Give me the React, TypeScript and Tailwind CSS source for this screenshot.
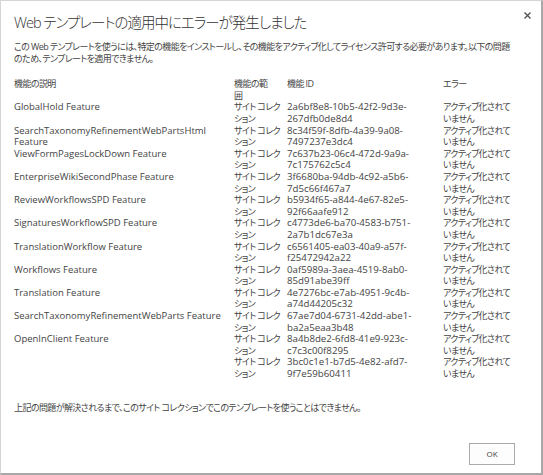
const features: { name: string; id: string }[] = [
  { name: "GlobalHold Feature", id: "2a6bf8e8-10b5-42f2-9d3e-267dfb0de8d4" },
  { name: "SearchTaxonomyRefinementWebPartsHtml Feature", id: "8c34f59f-8dfb-4a39-9a08-7497237e3dc4" },
  { name: "ViewFormPagesLockDown Feature", id: "7c637b23-06c4-472d-9a9a-7c175762c5c4" },
  { name: "EnterpriseWikiSecondPhase Feature", id: "3f6680ba-94db-4c92-a5b6-7d5c66f467a7" },
  { name: "ReviewWorkflowsSPD Feature", id: "b5934f65-a844-4e67-82e5-92f66aafe912" },
  { name: "SignaturesWorkflowSPD Feature", id: "c4773de6-ba70-4583-b751-2a7b1dc67e3a" },
  { name: "TranslationWorkflow Feature", id: "c6561405-ea03-40a9-a57f-f25472942a22" },
  { name: "Workflows Feature", id: "0af5989a-3aea-4519-8ab0-85d91abe39ff" },
  { name: "Translation Feature", id: "4e7276bc-e7ab-4951-9c4b-a74d44205c32" },
  { name: "SearchTaxonomyRefinementWebParts Feature", id: "67ae7d04-6731-42dd-abe1-ba2a5eaa3b48" },
  { name: "OpenInClient Feature", id: "8a4b8de2-6fd8-41e9-923c-c7c3c00f8295" },
  { name: "", id: "3bc0c1e1-b7d5-4e82-afd7-9f7e59b60411" },
];

// japanese runs get proportional kana + a little squeeze, like Meiryo UI
const jp = "text-[9px] [font-feature-settings:'palt'] tracking-[-0.6px]";

const App = () => {
  return (
    <div className="w-[543px] h-[475px] bg-white border border-[#d4d4d4] border-r-2 border-b-2 border-r-[#a8a8a8] border-b-[#a8a8a8] flex flex-col pl-[13px] pt-[12px] font-['Open_Sans','Noto_Sans_CJK_JP',sans-serif] text-[#444]">
      <div className="flex justify-between items-start pr-[10px]">
        <h1 className="text-[14.5px] leading-[20px] text-[#333] font-light [font-feature-settings:'palt'] tracking-[-1px]">
          Web テンプレートの適用中にエラーが発生しました
        </h1>
        <button className="-mt-[1px] w-[7px] h-[7px]" aria-label="閉じる">
          <svg viewBox="0 0 7 7" width="7" height="7">
            <path d="M0.5 0.5L6.5 6.5M6.5 0.5L0.5 6.5" stroke="#555" strokeWidth="1.4" />
          </svg>
        </button>
      </div>

      <p className={`mt-[8px] pr-[30px] leading-[11.6px] ${jp}`}>
        この Web テンプレートを使うには、特定の機能をインストールし、その機能をアクティブ化してライセンス許可する必要があります。以下の問題のため、テンプレートを適用できません。
      </p>

      <div className="mt-[14px] grid grid-cols-[220px_53px_156px_1fr] text-[9.5px] leading-[11.6px]">
        <div className={`h-[23.2px] ${jp}`}>機能の説明</div>
        <div className={jp}>
          機能の範
          <br />囲
        </div>
        <div className={jp}>機能 ID</div>
        <div className={jp}>エラー</div>
        {features.map((f) => (
          <div key={f.id} className="contents">
            <div className="h-[23.2px] pr-[6px]">{f.name}</div>
            <div className={`whitespace-nowrap ${jp}`}>
              サイト&nbsp;コレク
              <br />
              ション
            </div>
            <div className="whitespace-nowrap text-[9.7px]">
              {f.id.slice(0, 24)}
              <br />
              {f.id.slice(24)}
            </div>
            <div className={`whitespace-nowrap ${jp}`}>
              アクティブ化されて
              <br />
              いません
            </div>
          </div>
        ))}
      </div>

      <p className={`mt-[22px] leading-[11.6px] ${jp}`}>
        上記の問題が解決されるまで、このサイト コレクションでこのテンプレートを使うことはできません。
      </p>

      <div className="mt-auto mb-[8px] mr-[26px] flex justify-end">
        <button className="w-[46px] h-[22px] border border-[#ababab] bg-[#fdfdfd] text-[8px] text-[#444]">
          OK
        </button>
      </div>
    </div>
  );
};

export default App;
